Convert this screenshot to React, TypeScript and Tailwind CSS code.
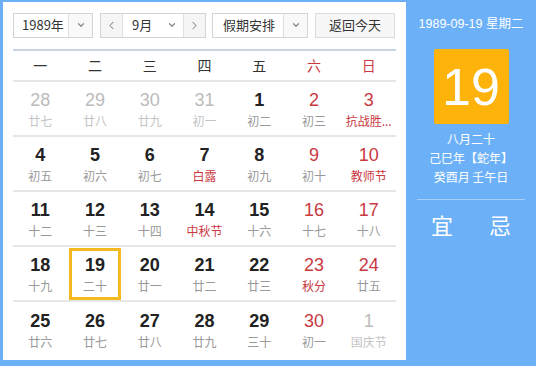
import { ChevronDown, ChevronLeft, ChevronRight } from 'lucide-react'

type Day = { n: number; l: string; muted?: boolean; red?: boolean; fest?: boolean; sel?: boolean }

const weeks: Day[][] = [
  [
    { n: 28, l: '廿七', muted: true },
    { n: 29, l: '廿八', muted: true },
    { n: 30, l: '廿九', muted: true },
    { n: 31, l: '初一', muted: true },
    { n: 1, l: '初二' },
    { n: 2, l: '初三', red: true },
    { n: 3, l: '抗战胜...', red: true, fest: true },
  ],
  [
    { n: 4, l: '初五' },
    { n: 5, l: '初六' },
    { n: 6, l: '初七' },
    { n: 7, l: '白露', fest: true },
    { n: 8, l: '初九' },
    { n: 9, l: '初十', red: true },
    { n: 10, l: '教师节', red: true, fest: true },
  ],
  [
    { n: 11, l: '十二' },
    { n: 12, l: '十三' },
    { n: 13, l: '十四' },
    { n: 14, l: '中秋节', fest: true },
    { n: 15, l: '十六' },
    { n: 16, l: '十七', red: true },
    { n: 17, l: '十八', red: true },
  ],
  [
    { n: 18, l: '十九' },
    { n: 19, l: '二十', sel: true },
    { n: 20, l: '廿一' },
    { n: 21, l: '廿二' },
    { n: 22, l: '廿三' },
    { n: 23, l: '秋分', red: true, fest: true },
    { n: 24, l: '廿五', red: true },
  ],
  [
    { n: 25, l: '廿六' },
    { n: 26, l: '廿七' },
    { n: 27, l: '廿八' },
    { n: 28, l: '廿九' },
    { n: 29, l: '三十' },
    { n: 30, l: '初一', red: true },
    { n: 1, l: '国庆节', muted: true },
  ],
]

const weekdays = ['一', '二', '三', '四', '五', '六', '日']

function Cell({ d }: { d: Day }) {
  const numColor = d.muted ? 'text-[#bbbbbb]' : d.red ? 'text-[#c9393f]' : 'text-[#222222] font-bold'
  const lunarColor = d.muted ? 'text-[#c4c4c4]' : d.fest ? 'text-[#c9393f]' : 'text-[#999999]'
  return (
    <div className="flex items-center justify-center">
      <div
        className={`flex h-[52px] w-[52px] flex-col items-center justify-center ${
          d.sel ? 'border-[3px] border-[#f5b920]' : ''
        }`}
      >
        <div className={`text-[18px] leading-[22px] font-['Liberation_Sans',Arial,sans-serif] ${numColor}`}>{d.n}</div>
        <div className={`mt-[2px] text-[12px] leading-[16px] whitespace-nowrap ${lunarColor}`}>{d.l}</div>
      </div>
    </div>
  )
}

export default function App() {
  return (
    <div className="flex h-[366px] w-[536px] bg-[#6cb1f8] font-['Noto_Sans_CJK_SC',sans-serif]">
      <div className="mt-[2px] mb-[6px] ml-[3px] flex w-[403px] flex-col bg-white px-[10px] pt-[10px]">
        {/* toolbar */}
        <div className="flex h-[26px] items-center text-[13px] text-[#333333]">
          <div className="flex h-[25px] w-[80px] items-center border border-[#d4d4d4] bg-white">
            <span className="flex-1 pl-[8px]">1989年</span>
            <span className="flex h-full w-[24px] items-center justify-center border-l border-[#e0e0e0] bg-[#f9f9f9]">
              <ChevronDown size={10} strokeWidth={3} className="text-[#888]" />
            </span>
          </div>
          <div className="ml-[7px] flex h-[25px] w-[106px] items-center border border-[#d4d4d4] bg-white">
            <span className="flex h-full w-[22px] items-center justify-center border-r border-[#e0e0e0] bg-[#f5f5f5]">
              <ChevronLeft size={13} strokeWidth={1.5} className="text-[#555]" />
            </span>
            <span className="flex-1 pl-[9px]">9月</span>
            <ChevronDown size={10} strokeWidth={3} className="mr-[6px] text-[#888]" />
            <span className="flex h-full w-[22px] items-center justify-center border-l border-[#e0e0e0] bg-[#f5f5f5]">
              <ChevronRight size={13} strokeWidth={1.5} className="text-[#555]" />
            </span>
          </div>
          <div className="ml-[6px] flex h-[25px] w-[96px] items-center border border-[#d4d4d4] bg-white">
            <span className="flex-1 pl-[10px]">假期安排</span>
            <span className="flex h-full w-[24px] items-center justify-center border-l border-[#e0e0e0] bg-[#f9f9f9]">
              <ChevronDown size={10} strokeWidth={3} className="text-[#888]" />
            </span>
          </div>
          <button className="ml-[7px] h-[25px] w-[80px] border border-[#dcdcdc] bg-[#f7f7f7] text-[13px] text-[#333]">
            返回今天
          </button>
        </div>

        {/* weekday header */}
        <div className="mt-[11px] grid h-[33px] grid-cols-7 items-center border-t-2 border-b-2 border-[#c8d6e4] border-b-[#e6e6e6] text-[14px] text-[#333333]">
          {weekdays.map((w, i) => (
            <div key={w} className={`text-center ${i >= 5 ? 'text-[#c9393f]' : ''}`}>
              {w}
            </div>
          ))}
        </div>

        {/* days */}
        {weeks.map((wk, i) => (
          <div
            key={i}
            className={`grid h-[55px] grid-cols-7 ${i < weeks.length - 1 ? 'border-b-2 border-[#e6e6e6]' : ''}`}
          >
            {wk.map((d, j) => (
              <Cell key={j} d={d} />
            ))}
          </div>
        ))}
      </div>

      {/* side panel */}
      <div className="flex flex-1 flex-col items-center pt-[15px] text-white">
        <div className="text-[12.5px] leading-[18px] font-['Liberation_Sans','Noto_Sans_CJK_SC',sans-serif]">1989-09-19 星期二</div>
        <div className="mt-[16px] flex h-[75px] w-[75px] items-center justify-center rounded-[2px] bg-[#fdb30a] text-[52px] font-light font-['Liberation_Sans',sans-serif]">
          19
        </div>
        <div className="mt-[5px] text-[12px] leading-[19px]">八月二十</div>
        <div className="text-[12px] leading-[19px]">己巳年【蛇年】</div>
        <div className="text-[12px] leading-[19px]">癸酉月 壬午日</div>
        <div className="mt-[13px] h-[1px] w-[108px] bg-[#a6cffa]" />
        <div className="mt-[10px] flex w-[108px] justify-between px-[14px] text-[22px] leading-[28px]">
          <span>宜</span>
          <span>忌</span>
        </div>
      </div>
    </div>
  )
}
